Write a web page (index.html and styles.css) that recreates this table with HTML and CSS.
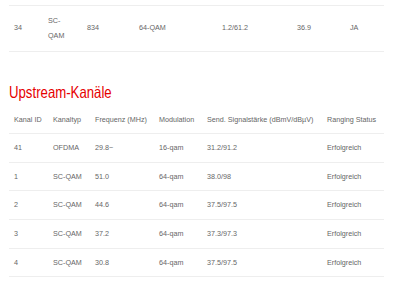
FILE: index.html
```html
<!DOCTYPE html>
<html lang="de">
<head>
<meta charset="utf-8">
<link rel="stylesheet" href="styles.css">
</head>
<body>
<div class="page">
  <table class="tbl tbl-down">
    <colgroup>
      <col class="d1"><col class="d2"><col class="d3"><col class="d4"><col class="d5"><col class="d6"><col class="d7">
    </colgroup>
    <tbody>
      <tr><td>34</td><td class="narrow">SC-QAM</td><td>834</td><td>64-QAM</td><td>1.2/61.2</td><td>36.9</td><td>JA</td></tr>
    </tbody>
  </table>

  <h2 class="title">Upstream-Kanäle</h2>

  <table class="tbl tbl-up">
    <colgroup>
      <col class="u1"><col class="u2"><col class="u3"><col class="u4"><col class="u5"><col class="u6">
    </colgroup>
    <thead>
      <tr><th>Kanal ID</th><th>Kanaltyp</th><th>Frequenz (MHz)</th><th>Modulation</th><th>Send. Signalstärke (dBmV/dBµV)</th><th>Ranging Status</th></tr>
    </thead>
    <tbody>
      <tr><td>41</td><td>OFDMA</td><td>29.8~</td><td>16-qam</td><td>31.2/91.2</td><td>Erfolgreich</td></tr>
      <tr><td>1</td><td>SC-QAM</td><td>51.0</td><td>64-qam</td><td>38.0/98</td><td>Erfolgreich</td></tr>
      <tr><td>2</td><td>SC-QAM</td><td>44.6</td><td>64-qam</td><td>37.5/97.5</td><td>Erfolgreich</td></tr>
      <tr><td>3</td><td>SC-QAM</td><td>37.2</td><td>64-qam</td><td>37.3/97.3</td><td>Erfolgreich</td></tr>
      <tr><td>4</td><td>SC-QAM</td><td>30.8</td><td>64-qam</td><td>37.5/97.5</td><td>Erfolgreich</td></tr>
    </tbody>
  </table>
</div>
</body>
</html>
```
FILE: styles.css
```css
html, body {
  margin: 0;
  padding: 0;
  background: #ffffff;
}

.page {
  padding: 5px 16px 0 9px;
  font-family: "Liberation Sans", Arial, sans-serif;
  color: #666666;
}

.tbl {
  width: 375px;
  border-collapse: collapse;
  table-layout: fixed;
  font-size: 7.2px;
}

.tbl td,
.tbl th {
  padding: 6px 4px 6px 5px;
  line-height: 15.6px;
  text-align: left;
  font-weight: normal;
  vertical-align: middle;
  border-bottom: 1px solid #eeeeee;
}

.tbl-down {
  border-top: 1px solid #eeeeee;
}

.tbl-down td {
  padding-top: 6.5px;
  padding-bottom: 7px;
}

.tbl-down td.narrow {
  padding-right: 12px;
}

.d1 { width: 34px; }
.d2 { width: 39px; }
.d3 { width: 52px; }
.d4 { width: 83px; }
.d5 { width: 75px; }
.d6 { width: 53px; }
.d7 { width: 39px; }

.u1 { width: 39px; }
.u2 { width: 42px; }
.u3 { width: 64px; }
.u4 { width: 48px; }
.u5 { width: 120px; }
.u6 { width: 62px; }

.title {
  margin: 30px 0 4px 0;
  font-size: 16.5px;
  line-height: 20px;
  font-weight: normal;
  color: #e60000;
  font-family: "Liberation Sans", Arial, sans-serif;
  transform: scaleX(0.8);
  transform-origin: left center;
}
```
